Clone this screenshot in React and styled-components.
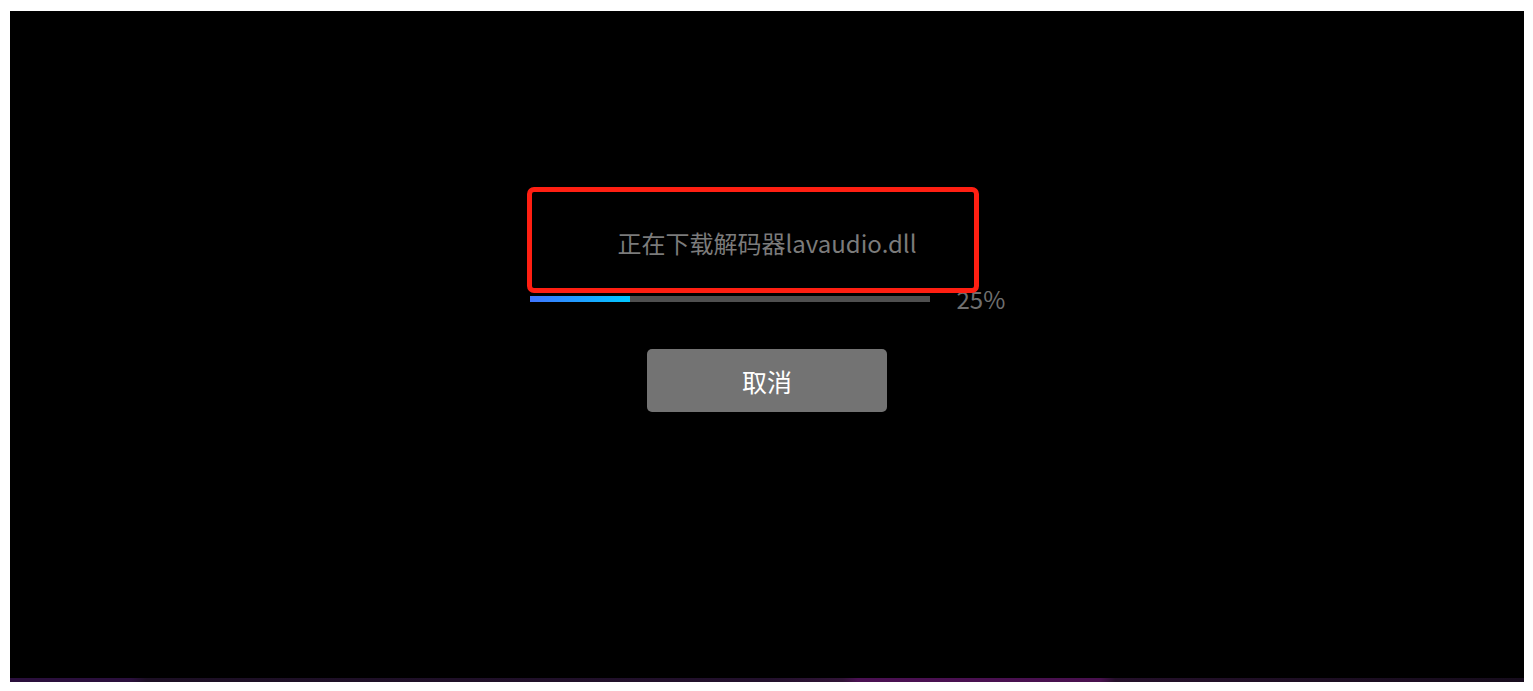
import styled, { createGlobalStyle } from 'styled-components'

const GlobalStyle = createGlobalStyle`
  html, body {
    margin: 0;
    background: #fff;
  }
  body {
    padding: 11px 9px 0 10px;
    font-family: "Microsoft YaHei", "Noto Sans CJK SC", "Noto Sans", sans-serif;
  }
`

export default function App() {
  const percent = 25

  return (
    <>
      <GlobalStyle />
      <Screen>
        <Dialog>
          <Title>正在下载解码器lavaudio.dll</Title>
          <ProgressRow>
            <Track>
              <Fill style={{ width: `${percent}%` }} />
            </Track>
            <Percent>{percent}%</Percent>
          </ProgressRow>
          <CancelButton type="button">取消</CancelButton>
          <Highlight />
        </Dialog>
      </Screen>
      <GlowStrip />
    </>
  )
}

const Screen = styled.div`
  height: 667px;
  background: #000;
  display: flex;
  justify-content: center;
  align-items: flex-start;
`

const Dialog = styled.div`
  position: relative;
  display: flex;
  flex-direction: column;
  align-items: center;
  padding-top: 216px;
`

const Title = styled.div`
  font-size: 24px;
  line-height: 32px;
  color: #7b7b7b;
  white-space: nowrap;
`

// red annotation frame drawn over the title
const Highlight = styled.div`
  position: absolute;
  left: -3px;
  top: 176px;
  box-sizing: border-box;
  width: 452px;
  height: 106px;
  border: 5px solid #ff1f12;
  border-radius: 7px;
  pointer-events: none;
`

const ProgressRow = styled.div`
  display: flex;
  align-items: center;
  gap: 27px;
  margin-top: 28px;
`

const Track = styled.div`
  width: 400px;
  height: 6px;
  background: #4f4f4f;
`

const Fill = styled.div`
  height: 100%;
  background: linear-gradient(90deg, #3f74ff 0%, #00c8ff 100%);
`

const Percent = styled.span`
  width: 48px;
  font-size: 24px;
  line-height: 24px;
  color: #6f6f6f;
`

const CancelButton = styled.button`
  margin-top: 38px;
  width: 240px;
  height: 63px;
  border: none;
  border-radius: 5px;
  background: #737373;
  color: #fff;
  font-family: inherit;
  font-size: 25px;
  cursor: pointer;
`

const GlowStrip = styled.div`
  height: 4px;
  background: linear-gradient(
    90deg,
    #2a0f3c 0%,
    #2a0f3c 8%,
    #1c0f24 9%,
    #22102c 50%,
    #301436 55%,
    #4a1052 56%,
    #48104e 72%,
    #24102a 73%,
    #160c1c 100%
  );
`
